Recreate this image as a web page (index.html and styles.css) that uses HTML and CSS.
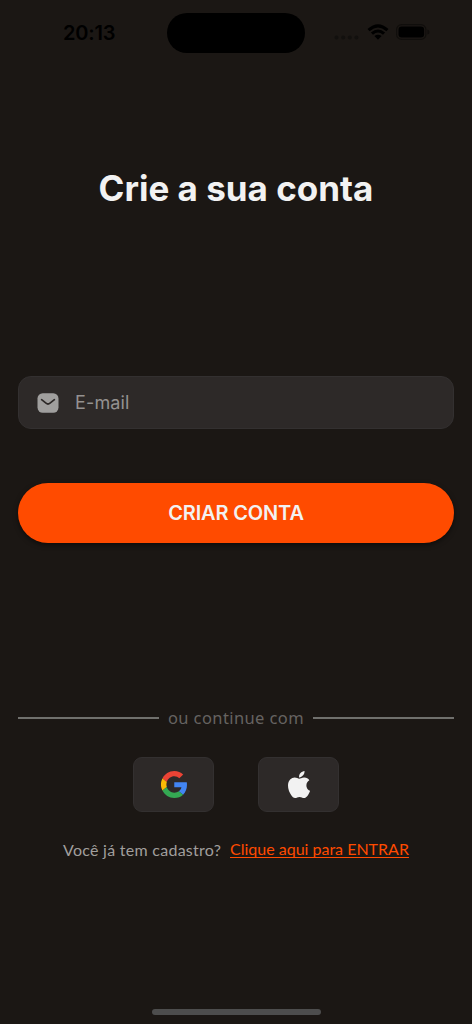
FILE: index.html
```html
<!DOCTYPE html>
<html lang="pt-BR">
<head>
<meta charset="utf-8">
<title>Crie a sua conta</title>
<link rel="stylesheet" href="styles.css">
</head>
<body>
<div class="screen">
  <header class="status">
    <time class="clock">20:13</time>
    <div class="island"></div>
    <div class="indicators">
      <svg class="signal" width="25" height="5" viewBox="0 0 25 5"><circle cx="2.5" cy="2.5" r="2"/><circle cx="9.2" cy="2.5" r="2"/><circle cx="15.8" cy="2.5" r="2"/><circle cx="22.4" cy="2.5" r="2"/></svg>
      <svg class="wifi" width="22" height="16" viewBox="0 0 22 16"><path d="M.5 5Q11-4.400 21.500 5L19.400 7.200Q11-.2 2.600 7.200ZM3.900 8.500Q11 2.400 18.100 8.500L16 10.700Q11 6.500 6 10.700ZM7.400 12.100Q11 9.200 14.600 12.100L11 15.700Z"/></svg>
      <svg class="battery" width="34" height="16" viewBox="0 0 34 16"><rect class="battery-case" x=".6" y=".6" width="29.3" height="14.8" rx="5"/><rect x="2.5" y="2.5" width="25.6" height="11" rx="3.2"/><path class="battery-tip" d="M31.4 5.5Q33.5 6 33.5 8T31.4 10.5Z"/></svg>
    </div>
  </header>
  <main class="content">
    <h1 class="title">Crie a sua conta</h1>
    <div class="field">
      <svg class="mail" width="22" height="20" viewBox="0 0 22 20"><rect x=".5" y=".3" width="21" height="19.4" rx="5.2"/><path d="M4.600 6.700L9 10.200Q11 11.800 13 10.200L17.400 6.700"/></svg>
      <input class="input" type="email" placeholder="E-mail" aria-label="E-mail">
    </div>
    <button class="submit">CRIAR CONTA</button>
    <div class="divider"><span class="rule"></span><span class="divider-text">ou continue com</span><span class="rule"></span></div>
    <div class="socials">
      <button class="social" aria-label="Google">
        <svg width="26" height="27" viewBox="0 0 47 48" preserveAspectRatio="none"><path fill="#EA4335" d="M24 9.5c3.54 0 6.71 1.22 9.21 3.6l6.85-6.85C35.9 2.38 30.47 0 24 0 14.62 0 6.51 5.38 2.56 13.22l7.98 6.19C12.43 13.72 17.74 9.5 24 9.5z"/><path fill="#4285F4" d="M46.98 24.55c0-1.57-.15-3.09-.38-4.55H24v9.02h12.94c-.58 2.96-2.26 5.48-4.78 7.18l7.73 6c4.51-4.18 7.09-10.36 7.09-17.65z"/><path fill="#FBBC05" d="M10.53 28.59A14.5 14.5 0 0 1 10.53 19.41L2.56 13.22A23.9 23.9 0 0 0 2.56 34.78z"/><path fill="#34A853" d="M24 48c6.48 0 11.93-2.13 15.89-5.81l-7.73-6c-2.15 1.45-4.92 2.3-8.16 2.3-6.26 0-11.57-4.22-13.47-9.91l-7.98 6.19C6.51 42.62 14.62 48 24 48z"/></svg>
      </button>
      <button class="social" aria-label="Apple">
        <svg width="22" height="27" viewBox="4 0 376 448" preserveAspectRatio="none"><path fill="#f2f2f2" transform="translate(0 -32)" d="M318.700 268.700c-.2-36.700 16.400-64.400 50-84.800-18.800-26.900-47.200-41.700-84.700-44.600-35.500-2.800-74.300 20.700-88.500 20.700-15 0-49.400-19.700-76.400-19.700C63.300 141.200 4 184.800 4 273.500q0 39.300 14.400 81.200c12.800 36.700 59 126.700 107.200 125.200 25.200-.6 43-17.900 75.800-17.900 31.800 0 48.300 17.900 76.400 17.900 48.600-.7 90.400-82.500 102.600-119.300-65.200-30.700-61.700-90-61.700-91.900zm-56.600-164.200c27.300-32.400 24.800-61.900 24-72.500-24.100 1.400-52 16.400-67.900 34.900-17.500 19.800-27.800 44.300-25.600 71.900 26.100 2 49.900-11.400 69.500-34.300z"/></svg>
      </button>
    </div>
    <p class="login"><span class="question">Você já tem cadastro?</span><a class="link" href="#">Clique aqui para ENTRAR</a></p>
  </main>
  <div class="home-bar"></div>
</div>
</body>
</html>
```

FILE: styles.css
```css
* { box-sizing: border-box; }
body { margin: 0; background: #1b1714; font-family: Inter, sans-serif; }
button { border: 0; font: inherit; }
.screen { width: 472px; height: 1024px; display: flex; flex-direction: column; overflow: hidden; }
.status { height: 53px; padding-top: 13px; display: grid; grid-template-columns: 167px 138px 167px; flex-shrink: 0; }
.clock { padding-left: 63px; font-size: 20px; font-weight: 600; line-height: 40px; letter-spacing: -0.2px; color: #000; }
.island { height: 40px; border-radius: 20px; background: #000; }
.indicators { display: flex; padding: 11px 0 0 29px; }
.signal { margin: 11px 8px 0 0; fill: #12100e; }
.wifi { margin-right: 7px; }
.battery-case { fill: none; stroke: #100e0c; stroke-width: 1.2; }
.battery-tip { fill: #100e0c; }
.content { flex: 1; display: flex; flex-direction: column; padding: 114px 18px 0; }
.title { margin: 0; height: 44px; line-height: 43px; font-size: 35px; font-weight: 650; font-optical-sizing: none; text-align: center; color: #f2f2f2; letter-spacing: 0; }
.field { margin-top: 165px; height: 53px; padding-left: 18px; display: flex; align-items: center; gap: 16px; border: 1px solid #333030; border-radius: 13px; background: #2d2928; }
.mail { fill: #a09f9e; }
.mail path { fill: none; stroke: #2d2928; stroke-width: 1.7; stroke-linecap: round; }
.input { flex: 1; height: 30px; padding: 0; border: 0; outline: 0; background: none; font: 400 18px Inter, sans-serif; letter-spacing: 0.15px; color: #f2f2f2; }
.input::placeholder { color: #949190; opacity: 1; }
.submit { margin-top: 54px; height: 60px; border-radius: 30px; background: #ff4b00; color: #f2f2f2; font-size: 20px; font-weight: 600; letter-spacing: -0.15px; box-shadow: 0 2px 5px rgba(0,0,0,.5); }
.divider { margin-top: 163px; height: 24px; display: flex; align-items: center; }
.rule { width: 141px; height: 2px; background: #70706d; }
.divider-text { flex: 1; text-align: center; white-space: nowrap; font: 400 16.5px/24px "Noto Sans", sans-serif; letter-spacing: 0.4px; color: #666361; }
.socials { margin-top: 27px; padding-right: 1px; display: flex; justify-content: center; gap: 44px; }
.social { width: 81px; height: 55px; padding: 0 0 0 1px; display: grid; place-items: center; border: 1px solid #333030; border-radius: 9px; background: #2d2928; }
.login { margin: 26px 0 0; padding-left: 45px; height: 24px; display: flex; font: 400 16px/24px Lato, sans-serif; white-space: nowrap; }
.question { width: 167px; color: #a19f9d; letter-spacing: 0.27px; }
.link { height: 22px; line-height: 22px; color: #ff4b00; text-underline-offset: 2px; text-decoration-thickness: 1px; text-decoration-skip-ink: none; }
.home-bar { width: 169px; height: 6px; margin: 0 auto 9px; border-radius: 3px; background: #4d4d4d; }
```
